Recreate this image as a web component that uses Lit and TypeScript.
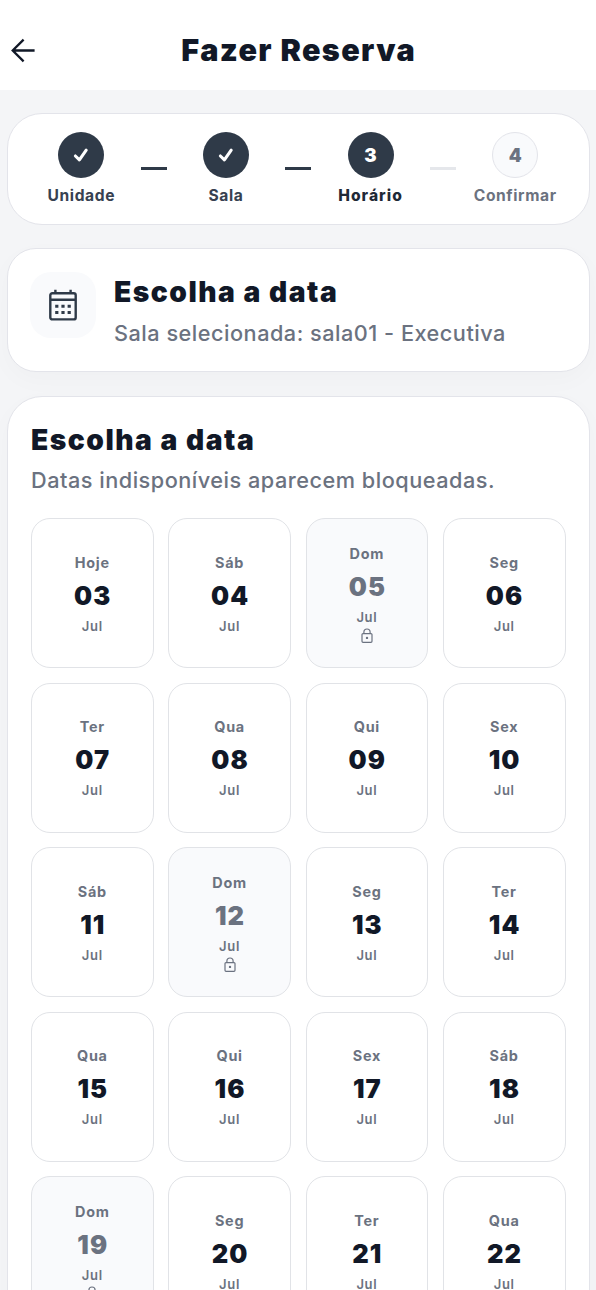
import { LitElement, html, css, svg } from "lit";
import { customElement, property } from "lit/decorators.js";
import { classMap } from "lit/directives/class-map.js";

type StepState = "done" | "current" | "pending";

interface Step {
  label: string;
  state: StepState;
}

interface Day {
  week: string;
  day: string;
  month: string;
  locked: boolean;
}

const STEPS: Step[] = [
  { label: "Unidade", state: "done" },
  { label: "Sala", state: "done" },
  { label: "Horário", state: "current" },
  { label: "Confirmar", state: "pending" },
];

const WEEK = ["Dom", "Seg", "Ter", "Qua", "Qui", "Sex", "Sáb"];

// 3 July falls on a Friday; Sundays are closed.
const DAYS: Day[] = Array.from({ length: 20 }, (_, i) => {
  const weekday = (5 + i) % 7;
  return {
    week: i === 0 ? "Hoje" : WEEK[weekday],
    day: String(3 + i).padStart(2, "0"),
    month: "Jul",
    locked: weekday === 0,
  };
});

const backIcon = svg`<path d="M23.6 12.5H1.8M12.6 1.6 1.7 12.5l10.9 10.9" fill="none" stroke="currentColor" stroke-width="2.3"/>`;

@customElement("step-bar")
export class StepBar extends LitElement {
  static styles = css`
    :host { display: block; }
    .bar {
      display: flex;
      align-items: center;
      box-sizing: border-box;
      height: 112px;
      padding: 0 14px 2px;
      background: #fff;
      border: 1px solid #e3e4ea;
      border-radius: 35px;
    }
    .step {
      flex: 1 1 0;
      min-width: 0;
      display: flex;
      flex-direction: column;
      align-items: center;
      gap: 7px;
    }
    .dot {
      box-sizing: border-box;
      width: 46px;
      height: 46px;
      border-radius: 50%;
      display: flex;
      align-items: center;
      justify-content: center;
      font-size: 18.5px;
      font-weight: 900;
      color: #fff;
      background: #2f3a48;
    }
    .pending .dot {
      color: #6b7280;
      background: #f9fafc;
      border: 1px solid #e3e4ea;
    }
    .label {
      padding-top: 1px;
      margin-bottom: -1px;
      font-size: 15.6px;
      line-height: 20px;
      font-weight: 650;
      letter-spacing: 0.6px;
      color: #374151;
      white-space: nowrap;
    }
    .current .label { font-weight: 850; letter-spacing: 1.05px; color: #1f2937; }
    .pending .label { color: #6b7280; }
    .link { flex: none; width: 26px; height: 3px; background: #2f3a48; }
    .link.off { background: #e5e7eb; }
    .check { display: block; width: 16px; height: 16px; }
  `;

  render() {
    return html`<div class="bar">
      ${STEPS.map(
        (s, i) => html`
          ${i
            ? html`<div class=${classMap({ link: true, off: s.state === "pending" })}></div>`
            : null}
          <div class="step ${s.state}">
            <div class="dot">
              ${s.state === "done"
                ? html`<svg class="check" viewBox="0 0 16 16">
                    <path d="M2.4 9 6.4 12.8 13.2 3.2" fill="none" stroke="#fff"
                      stroke-width="3.1" stroke-linecap="round" stroke-linejoin="round" />
                  </svg>`
                : i + 1}
            </div>
            <div class="label">${s.label}</div>
          </div>
        `
      )}
    </div>`;
  }
}

@customElement("day-card")
export class DayCard extends LitElement {
  @property({ attribute: false }) day!: Day;

  static styles = css`
    :host { display: block; }
    .day {
      box-sizing: border-box;
      height: 150px;
      padding-top: 2px;
      display: flex;
      flex-direction: column;
      align-items: center;
      justify-content: center;
      border: 1px solid #e1e3e7;
      border-radius: 19px;
      background: #fff;
      color: #6b7280;
    }
    .locked { background: #f9fafc; }
    .week {
      font-size: 14.4px;
      line-height: 18px;
      font-weight: 700;
      letter-spacing: 0.75px;
    }
    .num {
      margin-top: 8px;
      font-size: 25.5px;
      line-height: 31px;
      font-weight: 900;
      letter-spacing: 1.1px;
      padding-left: 0.9px;
      color: #111827;
    }
    .locked .num { color: #6b7280; }
    .month {
      margin-top: 7px;
      font-size: 13px;
      line-height: 17px;
      font-weight: 600;
      letter-spacing: 0.7px;
    }
    .lock { display: block; width: 14px; height: 16px; margin-top: 2px; }
  `;

  render() {
    const d = this.day;
    return html`<div class=${classMap({ day: true, locked: d.locked })}>
      <div class="week">${d.week}</div>
      <div class="num">${d.day}</div>
      <div class="month">${d.month}</div>
      ${d.locked
        ? html`<svg class="lock" viewBox="0 0 14 16">
            <path d="M3.9 5.6V4.1a3.1 3.1 0 0 1 6.2 0v1.5" fill="none" stroke="currentColor" stroke-width="1.2" />
            <rect x="2" y="5.6" width="10" height="8.7" rx="1" fill="none" stroke="currentColor" stroke-width="1.2" />
            <circle cx="7" cy="9.9" r="1.2" fill="currentColor" />
          </svg>`
        : null}
    </div>`;
  }
}

@customElement("app-root")
export class AppRoot extends LitElement {
  static styles = css`
    :host {
      display: block;
      height: 1290px;
      overflow: hidden;
      background: #f4f5f7;
      font-family: Inter, "Liberation Sans", sans-serif;
      color: #111827;
    }
    .top {
      display: grid;
      grid-template-columns: 48px 1fr 48px;
      align-items: center;
      box-sizing: border-box;
      height: 90px;
      padding-top: 10px;
      background: #fff;
    }
    .back { display: block; width: 25px; height: 25px; margin-left: 11px; }
    h1, h2 { margin: 0; font-weight: 900; white-space: nowrap; }
    h1 {
      text-align: center;
      font-size: 30.6px;
      line-height: 36px;
      letter-spacing: 1.35px;
      padding-left: 1.3px;
    }
    h2 { font-size: 28.2px; line-height: 34px; letter-spacing: 1.5px; }
    p {
      margin: 0;
      font-size: 21.7px;
      line-height: 30px;
      font-weight: 500;
      letter-spacing: 0.5px;
      color: #6b7280;
      white-space: nowrap;
    }
    main {
      display: flex;
      flex-direction: column;
      gap: 24px;
      padding: 23px 6.5px 0 7px;
    }
    .card {
      box-sizing: border-box;
      background: #fff;
      border: 1px solid #e3e4ea;
      box-shadow: 0 8px 26px rgba(17, 24, 39, 0.022);
    }
    .hero {
      display: flex;
      gap: 18px;
      height: 124px;
      padding: 23px 22px;
      border-radius: 29px;
      margin-top: -1px;
    }
    .tile {
      flex: none;
      width: 66px;
      height: 66px;
      border-radius: 21px;
      background: #f9fafc;
      display: flex;
      align-items: center;
      justify-content: center;
    }
    .cal { display: block; width: 28px; height: 32px; }
    .copy { display: flex; flex-direction: column; gap: 9px; padding-top: 3px; }
    .dates { padding: 26px 23px; border-radius: 35px; height: 1000px; }
    .head { display: flex; flex-direction: column; gap: 8px; }
    .grid {
      display: grid;
      grid-template-columns: repeat(4, 1fr);
      gap: 14.6px;
      margin-top: 23px;
    }
  `;

  render() {
    return html`
      <header class="top">
        <svg class="back" viewBox="0 0 25 25">${backIcon}</svg>
        <h1>Fazer Reserva</h1>
      </header>
      <main>
        <step-bar></step-bar>
        <section class="card hero">
          <div class="tile">
            <svg class="cal" viewBox="0 0 28 32" fill="none" stroke="#2f3a48" stroke-width="2.4">
              <rect x="1.3" y="4.2" width="25.4" height="26.2" rx="2" />
              <path d="M1.3 10.8h25.4M6.4 4.2V.8M21.6 4.2V.8" />
              <path d="M6.2 17.3h3.2M12.4 17.3h3.2M18.6 17.3h3.2M6.2 23.5h3.2M12.4 23.5h3.2M18.6 23.5h3.2" stroke-width="3.1" />
            </svg>
          </div>
          <div class="copy">
            <h2>Escolha a data</h2>
            <p>Sala selecionada: sala01 - Executiva</p>
          </div>
        </section>
        <section class="card dates">
          <div class="head">
            <h2>Escolha a data</h2>
            <p>Datas indisponíveis aparecem bloqueadas.</p>
          </div>
          <div class="grid">
            ${DAYS.map((d) => html`<day-card .day=${d}></day-card>`)}
          </div>
        </section>
      </main>
    `;
  }
}
